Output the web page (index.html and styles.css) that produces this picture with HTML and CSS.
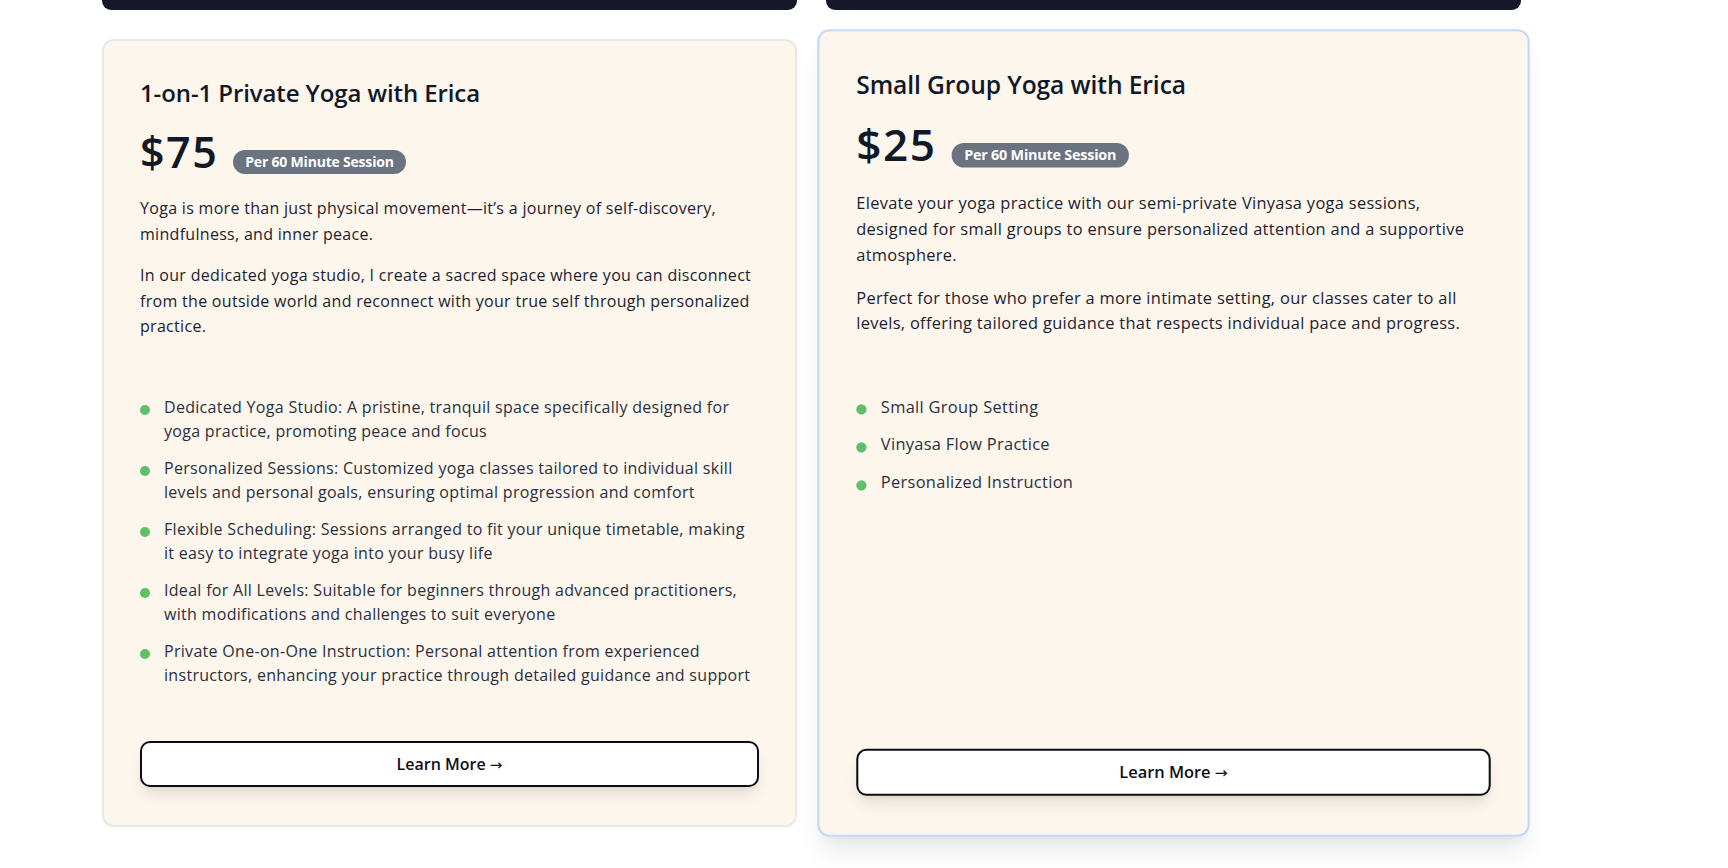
FILE: index.html
```html
<!DOCTYPE html>
<html lang="en">
<head>
<meta charset="utf-8">
<title>Yoga with Erica</title>
<link rel="stylesheet" href="styles.css">
</head>
<body>
<div class="page">
  <div class="bars">
    <div class="bar"></div>
    <div class="bar"></div>
  </div>
  <div class="cards">
    <div class="card">
      <h2 class="card-title">1-on-1 Private Yoga with Erica</h2>
      <div class="price-row">
        <span class="price">$75</span>
        <span class="badge">Per 60 Minute Session</span>
      </div>
      <p class="desc">Yoga is more than just physical movement—it’s a journey of self-discovery, mindfulness, and inner peace.</p>
      <p class="desc">In our dedicated yoga studio, I create a sacred space where you can disconnect from the outside world and reconnect with your true self through personalized practice.</p>
      <ul class="features">
        <li class="feature"><span class="dot"></span><span class="feature-text">Dedicated Yoga Studio: A pristine, tranquil space specifically designed for yoga practice, promoting peace and focus</span></li>
        <li class="feature"><span class="dot"></span><span class="feature-text">Personalized Sessions: Customized yoga classes tailored to individual skill levels and personal goals, ensuring optimal progression and comfort</span></li>
        <li class="feature"><span class="dot"></span><span class="feature-text">Flexible Scheduling: Sessions arranged to fit your unique timetable, making it easy to integrate yoga into your busy life</span></li>
        <li class="feature"><span class="dot"></span><span class="feature-text">Ideal for All Levels: Suitable for beginners through advanced practitioners, with modifications and challenges to suit everyone</span></li>
        <li class="feature"><span class="dot"></span><span class="feature-text">Private One-on-One Instruction: Personal attention from experienced instructors, enhancing your practice through detailed guidance and support</span></li>
      </ul>
      <button class="btn">Learn More <span class="arrow">→</span></button>
    </div>
    <div class="card card-active">
      <h2 class="card-title">Small Group Yoga with Erica</h2>
      <div class="price-row">
        <span class="price">$25</span>
        <span class="badge">Per 60 Minute Session</span>
      </div>
      <p class="desc">Elevate your yoga practice with our semi-private Vinyasa yoga sessions, designed for small groups to ensure personalized attention and a supportive atmosphere.</p>
      <p class="desc">Perfect for those who prefer a more intimate setting, our classes cater to all levels, offering tailored guidance that respects individual pace and progress.</p>
      <ul class="features">
        <li class="feature"><span class="dot"></span><span class="feature-text">Small Group Setting</span></li>
        <li class="feature"><span class="dot"></span><span class="feature-text">Vinyasa Flow Practice</span></li>
        <li class="feature"><span class="dot"></span><span class="feature-text">Personalized Instruction</span></li>
      </ul>
      <button class="btn">Learn More <span class="arrow">→</span></button>
    </div>
  </div>
</div>
</body>
</html>
```
FILE: styles.css
```css
* { box-sizing: border-box; }
html, body { margin: 0; padding: 0; background: #ffffff; }
body {
  font-family: "Open Sans", "Noto Sans", sans-serif;
  color: #1f2937;
}
.page {
  padding-left: 102px;
  padding-bottom: 42px;
  min-height: 868px;
}
.bars {
  display: grid;
  grid-template-columns: 695px 695px;
  column-gap: 29px;
}
.bar {
  height: 10px;
  background: #141829;
  border-radius: 0 0 9px 9px;
}
.cards {
  display: grid;
  grid-template-columns: 695px 695px;
  column-gap: 29px;
  margin-top: 29px;
  align-items: stretch;
}
.card {
  display: flex;
  flex-direction: column;
  background: #fdf6ed;
  border: 2px solid #ebe8e5;
  border-radius: 12px;
  padding: 36px 36px 38px;
  box-shadow: 0 1px 2px rgba(0,0,0,0.04);
}
.card-active {
  border-color: #c2d8fb;
  transform: scale(1.025);
  box-shadow: 0 20px 25px -5px rgba(0,0,0,0.08), 0 8px 10px -6px rgba(0,0,0,0.06);
}
.card-title {
  margin: 0 0 19px;
  font-size: 24px;
  line-height: 32px;
  font-weight: 600;
  letter-spacing: -0.1px;
  color: #111827;
}
.price-row {
  display: flex;
  align-items: baseline;
  gap: 15px;
  margin-bottom: 21px;
  padding-top: 3px;
}
.price {
  font-size: 43px;
  line-height: 42px;
  font-weight: 600;
  letter-spacing: 1.5px;
  color: #111827;
}
.badge {
  position: relative;
  top: -1px;
  background: #6b7280;
  color: #ffffff;
  font-size: 14px;
  line-height: 20px;
  font-weight: 700;
  letter-spacing: -0.2px;
  padding: 2px 12px;
  border-radius: 999px;
}
.desc {
  margin: 0 0 16px;
  font-size: 16px;
  line-height: 25.6px;
  letter-spacing: 0.3px;
  color: #1c2230;
}
.desc + .desc { margin-bottom: 0; }
.features {
  list-style: none;
  margin: 55px 0 54px;
  padding: 0;
  display: flex;
  flex-direction: column;
  gap: 13px;
}
.feature {
  display: flex;
  align-items: flex-start;
  gap: 14px;
  font-size: 16px;
  line-height: 24px;
  letter-spacing: 0.3px;
  color: #2a303d;
}
.dot {
  flex: none;
  width: 10px;
  height: 10px;
  margin-top: 10px;
  border-radius: 50%;
  background: #5ec16a;
}
.btn {
  margin-top: auto;
  display: block;
  width: 100%;
  height: 46px;
  background: #ffffff;
  border: 2px solid #0d0d17;
  border-radius: 10px;
  font-family: inherit;
  font-size: 16px;
  font-weight: 600;
  color: #0f0f1a;
  box-shadow: 0 10px 15px -3px rgba(0,0,0,0.1), 0 4px 6px -4px rgba(0,0,0,0.08);
  cursor: pointer;
}
.arrow {
  font-family: "DejaVu Sans", sans-serif;
  font-weight: 400;
  font-size: 15px;
}
```
